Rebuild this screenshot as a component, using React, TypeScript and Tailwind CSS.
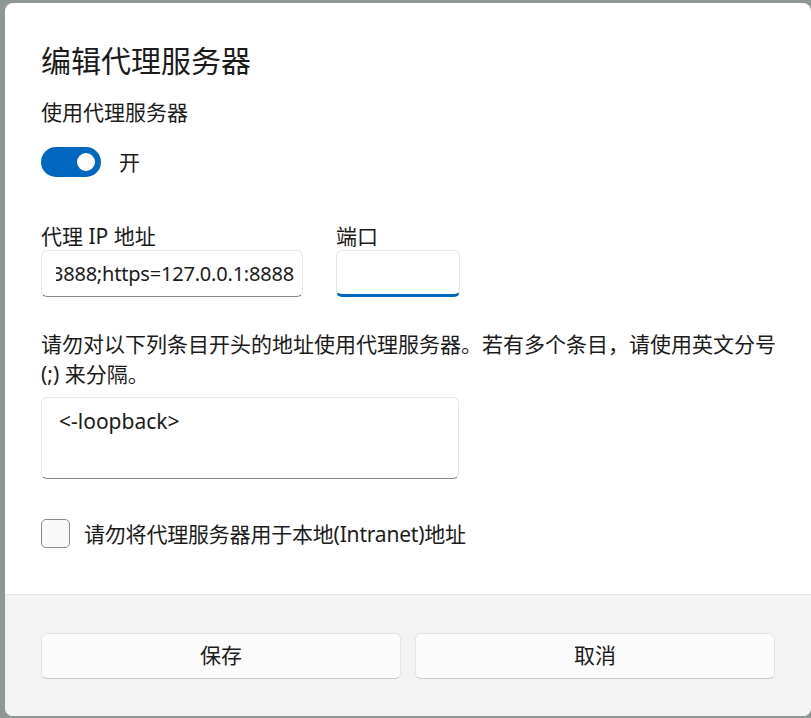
import React from 'react'

const font = { fontFamily: '"Noto Sans", "Noto Sans CJK SC", sans-serif' }

function Toggle() {
  return (
    <div className="flex items-center gap-[18px]">
      <div className="flex h-[30px] w-[60px] items-center justify-end rounded-full bg-[#0067c0] pr-[6px]">
        <div className="h-[18px] w-[18px] rounded-full bg-white" />
      </div>
      <span className="text-[21px] leading-[28px] text-[#1b1b1b]">开</span>
    </div>
  )
}

export default function App() {
  return (
    <div className="h-[718px] w-[811px] overflow-hidden bg-[#8e9792] pt-[3px] pl-[5px]" style={font}>
      <div className="flex h-[713px] w-[806px] flex-col overflow-hidden rounded-[8px] bg-white text-[#1b1b1b]">
        <div className="flex h-[591px] flex-col px-[36px] pt-[38px]">
          <h1 className="text-[30px] leading-[40px]">编辑代理服务器</h1>
          <p className="mt-[17px] text-[21px] leading-[28px]">使用代理服务器</p>
          <div className="mt-[21px]">
            <Toggle />
          </div>

          <div className="mt-[45px] flex gap-[33px]">
            <div className="flex flex-col">
              <label className="text-[21px] leading-[28px]">代理 IP 地址</label>
              <div className="flex h-[47px] w-[262px] items-center rounded-[6px] border border-[#e5e5e5] border-b-[#8a8a8a] bg-white pl-[14px] pr-[8px]">
                <div className="flex min-w-0 flex-1 justify-end overflow-hidden">
                  <span className="whitespace-nowrap text-[20px] tracking-[-0.2px]">3888;https=127.0.0.1:8888</span>
                </div>
              </div>
            </div>
            <div className="flex flex-col">
              <label className="text-[21px] leading-[28px]">端口</label>
              <div className="h-[47px] w-[124px] rounded-[6px] border border-[#e5e5e5] border-b-[3px] border-b-[#0067c0] bg-white" />
            </div>
          </div>

          <p className="mt-[32px] whitespace-nowrap text-[21px] leading-[30px]">
            请勿对以下列条目开头的地址使用代理服务器。若有多个条目，请使用英文分号
            <br />
            (;) 来分隔。
          </p>

          <div className="mt-[8px] h-[82px] w-[418px] rounded-[6px] border border-[#e5e5e5] border-b-[#8a8a8a] bg-white px-[17px] pt-[9px]">
            <span className="text-[21px] leading-[28px]">&lt;-loopback&gt;</span>
          </div>

          <div className="mt-[40px] flex items-center gap-[14px]">
            <div className="h-[29px] w-[29px] rounded-[5px] border border-[#8a8a8a] bg-[#f9f9f9]" />
            <span className="text-[21px] leading-[28px] tracking-[-0.2px]">请勿将代理服务器用于本地(Intranet)地址</span>
          </div>
        </div>

        <div className="flex flex-1 gap-[14px] border-t border-[#e5e5e5] bg-[#f3f3f3] px-[36px] pt-[38px]">
          <button className="h-[46px] flex-1 rounded-[6px] border border-[#e5e5e5] border-b-[#cccccc] bg-[#fbfbfb] text-[21px] text-[#1b1b1b]">
            保存
          </button>
          <button className="h-[46px] flex-1 rounded-[6px] border border-[#e5e5e5] border-b-[#cccccc] bg-[#fbfbfb] text-[21px] text-[#1b1b1b]">
            取消
          </button>
        </div>
      </div>
    </div>
  )
}
